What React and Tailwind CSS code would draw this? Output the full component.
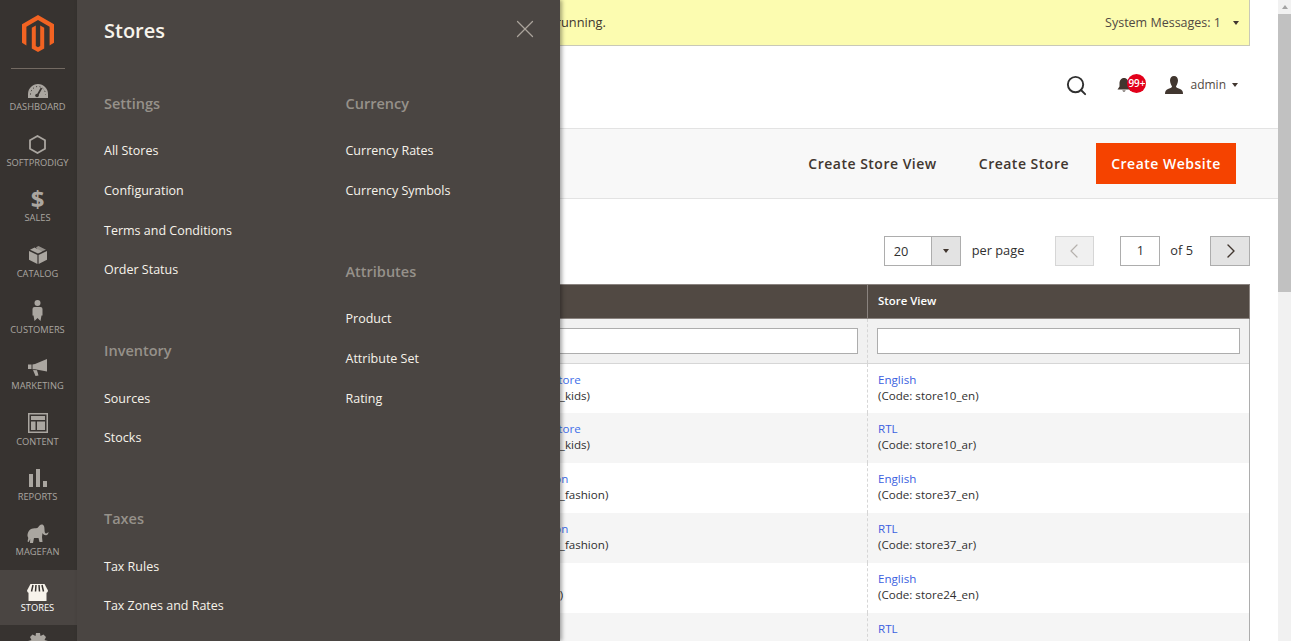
import React from 'react';
import { Search, X, ChevronLeft, ChevronRight } from 'lucide-react';

const LogoIcon = () => (
  <svg width="32" height="37" viewBox="0 0 32 37">
    <path fill="#f26322" d="M16 0 32 9.200V27.800L27.600 30.400V11.800L16 5.100 4.400 11.800 4.400 30.400 0 27.800V9.200Z" />
    <path fill="#f26322" d="M16 37 9.800 33.400V12.800L13.800 10.500V31L16 32.300 18.200 31V10.500L22.200 12.800V33.400Z" />
  </svg>
);

const icons = {
  dashboard: (
    <svg width="20" height="14" viewBox="0 0 20 14">
      <path fill="#aaa6a0" d="M10 0C4.500 0 0 4.500 0 10v4h20v-4C20 4.500 15.500 0 10 0Z" />
      <path stroke="#373330" strokeWidth="1" strokeDasharray="1 2.400" fill="none" d="M2.500 10.500C2.500 6 6 2.500 10 2.500S17.500 6 17.500 10.500" />
      <path stroke="#373330" strokeWidth="1.600" d="M9 12 13.500 4" />
      <circle cx="9" cy="11.500" r="1.800" fill="#373330" />
    </svg>
  ),
  hexagon: (
    <svg width="17" height="19" viewBox="0 0 17 19">
      <path fill="none" stroke="#aaa6a0" strokeWidth="1.800" d="M8.500 1 16 5.300V13.700L8.500 18 1 13.700V5.300Z" />
    </svg>
  ),
  catalog: (
    <svg width="18" height="18" viewBox="0 0 18 18">
      <path fill="#aaa6a0" d="M9 7.600 1 3.700 5.600 1.400 13 5.600Z" />
      <path fill="#aaa6a0" d="M10.500 6.800 15 4.500 17 3.700 9.500 0 7 1.200Z" opacity=".8" />
      <path fill="#aaa6a0" d="M0 5 8.400 9V18L0 13.800Z" />
      <path fill="#aaa6a0" d="M18 5 9.600 9V18L18 13.800Z" />
    </svg>
  ),
  customers: (
    <svg width="11" height="22" viewBox="0 0 11 22">
      <circle cx="5.500" cy="3" r="3" fill="#aaa6a0" />
      <path fill="#aaa6a0" d="M2.500 7H8.500Q10.500 7 10.500 9V15.500H9.500L8.500 21 5.500 18 2.500 21 1.500 15.500H.5V9Q.5 7 2.500 7Z" />
    </svg>
  ),
  marketing: (
    <svg width="20" height="17" viewBox="0 0 20 17">
      <path fill="#aaa6a0" d="M19 0V12.500L7 10.300 4.500 10.300V5.500L7 5Z" />
      <path fill="#aaa6a0" d="M0 5.500H3.500V10H0Z" />
      <path fill="#aaa6a0" d="M5 11 9 11.300 10.500 16.500 7.500 17Z" />
    </svg>
  ),
  content: (
    <svg width="20" height="20" viewBox="0 0 20 20">
      <path fill="none" stroke="#aaa6a0" strokeWidth="1.500" d="M.75.75h18.500v18.500H.75Z" />
      <path fill="#aaa6a0" d="M3 3H17V7H3ZM3 8.500H7.500V17H3ZM9 8.500H17V17H9Z" />
    </svg>
  ),
  reports: (
    <svg width="18" height="18" viewBox="0 0 18 18">
      <path fill="#aaa6a0" d="M0 5H4V18H0ZM7 0H11V18H7ZM14 12H18V18H14Z" />
    </svg>
  ),
  magefan: (
    <svg width="22" height="19" viewBox="0 0 22 19">
      <path fill="#aaa6a0" d="M.5 12C.5 8 2.500 5 6 4.500 8.500 4 10 4.500 11 3.500 12 1.500 13.500 0 15.500.5 17 1 17.500 3 17.500 5.500 17.500 8 18 9.500 19 9.500 20 9.500 20.500 8.500 21.500 8 21.500 10 20.500 11.200 19 11.200 17 11.200 16 10 15.500 9L15 13 15.500 18H12.500L11.500 14H7L6 19H3L3.200 15 1.800 18 .5 17.500 1.300 14Z" />
    </svg>
  ),
  stores: (
    <svg width="21" height="17" viewBox="0 0 21 17">
      <path fill="#f7f3eb" d="M1.500 8H19.500V17H1.500Z" />
      <path fill="#f7f3eb" d="M3.500 0H17.500L21 6.500Q21 9 17.500 9 3.500 9 3.500 9 0 9 0 6.500Z" />
      <path stroke="#373330" strokeWidth="1.500" d="M6 1 4.500 7.500M9 1 8.500 7.500M12 1 12.500 7.500M15 1 16.500 7.500" />
    </svg>
  ),
  gear: (
    <svg width="20" height="20" viewBox="0 0 20 20">
      <path fill="#aaa6a0" d="M8 0H12L12.500 3 15.500 1.500 18 4 16.500 7 20 8V12L16.500 13 18 16 15.500 18.500 12.500 17 12 20H8L7.500 17 4.500 18.500 2 16 3.500 13 0 12V8L3.500 7 2 4 4.500 1.500 7.500 3Z" />
    </svg>
  ),
};

const menu = [
  { label: 'DASHBOARD', icon: 'dashboard', h: 'h-[51px]', pb: 'pb-[6px]', iconBox: 'h-[18px]' },
  { label: 'SOFTPRODIGY', icon: 'hexagon', h: 'h-[56px]', pb: 'pb-[6px]', iconBox: 'h-[24px]' },
  { label: 'SALES', icon: 'sales', h: 'h-[55px]', pb: 'pb-[6px]', iconBox: 'h-[24px]' },
  { label: 'CATALOG', icon: 'catalog', h: 'h-[56px]', pb: 'pb-[6px]', iconBox: 'h-[24px]' },
  { label: 'CUSTOMERS', icon: 'customers', h: 'h-[56px]', pb: 'pb-[6px]', iconBox: 'h-[24px]' },
  { label: 'MARKETING', icon: 'marketing', h: 'h-[56px]', pb: 'pb-[6px]', iconBox: 'h-[24px]' },
  { label: 'CONTENT', icon: 'content', h: 'h-[56px]', pb: 'pb-[6px]', iconBox: 'h-[24px]' },
  { label: 'REPORTS', icon: 'reports', h: 'h-[55px]', pb: 'pb-[6px]', iconBox: 'h-[24px]' },
  { label: 'MAGEFAN', icon: 'magefan', h: 'h-[60px]', pb: 'pb-[11px]', iconBox: 'h-[24px]' },
];

const SideItem = ({ item, active }) => (
  <div className={`flex flex-col items-center justify-end pr-[2px] ${item.h} ${item.pb} ${active ? 'bg-[#4a4542] text-white' : 'text-[#aaa6a0]'}`}>
    <div className={`flex items-center justify-center ${item.iconBox}`}>
      {item.icon === 'sales' ? (
        <span className="text-[24px] leading-[20px] font-bold text-[#aaa6a0]">$</span>
      ) : (
        icons[item.icon]
      )}
    </div>
    <span className="text-[9.300px] leading-[14px]">{item.label}</span>
  </div>
);

const Sidebar = () => (
  <div className="w-[77px] h-[641px] shrink-0 bg-[#373330] overflow-hidden">
    <div className="flex justify-center pt-[15px] pr-[2px]">
      <LogoIcon />
    </div>
    <div className="ml-[11px] mr-[12px] mt-[16px] h-px bg-[#736a62]" />
    <div>
      {menu.map(item => <SideItem key={item.label} item={item} />)}
      <SideItem item={{ label: 'STORES', icon: 'stores', h: 'h-[55px]', pb: 'pb-[10px]', iconBox: 'h-[18px]' }} active />
      <div className="flex justify-center pt-[8px] pr-[2px]">{icons.gear}</div>
    </div>
  </div>
);

const MenuGroup = ({ title, items, className }) => (
  <div className={className}>
    <h3 className="text-[14.500px] leading-[20px] font-semibold text-[#96918a]">{title}</h3>
    <ul className="mt-[17.450px]">
      {items.map(i => (
        <li key={i} className="h-[39.600px] pt-[10px] text-[12.500px] leading-[20px] text-[#f7f3eb]">{i}</li>
      ))}
    </ul>
  </div>
);

const StoresPanel = () => (
  <div className="absolute left-[77px] top-0 w-[483px] h-[641px] bg-[#4a4542] shadow-[2px_0_4px_rgba(0,0,0,0.35)] overflow-hidden z-10">
    <div className="flex items-start justify-between pl-[27px] pr-[20px] pt-[17px]">
      <h2 className="text-[20px] leading-[27px] font-semibold text-[#f7f3eb]">Stores</h2>
      <X size={30} strokeWidth={1} className="text-[#aaa39b] -mt-[3px]" />
    </div>
    <div className="flex pl-[27px] pt-[50px]">
      <div className="w-[241.500px]">
        <MenuGroup title="Settings" items={['All Stores', 'Configuration', 'Terms and Conditions', 'Order Status']} />
        <MenuGroup className="mt-[51.350px]" title="Inventory" items={['Sources', 'Stocks']} />
        <MenuGroup className="mt-[51.350px]" title="Taxes" items={['Tax Rules', 'Tax Zones and Rates']} />
      </div>
      <div>
        <MenuGroup title="Currency" items={['Currency Rates', 'Currency Symbols']} />
        <MenuGroup className="mt-[51.350px]" title="Attributes" items={['Product', 'Attribute Set', 'Rating']} />
      </div>
    </div>
  </div>
);

const rows = [
  { store: 'Softprodigy Kids Store', code: '(Code: softprodigy_kids)', view: 'English', viewCode: '(Code: store10_en)', h: 'h-[49px]' },
  { store: 'Softprodigy Kids Store', code: '(Code: softprodigy_kids)', view: 'RTL', viewCode: '(Code: store10_ar)', h: 'h-[50px]', alt: true },
  { store: 'Softprodigy Fashion', code: '(Code: softprodigy_fashion)', view: 'English', viewCode: '(Code: store37_en)', h: 'h-[50px]' },
  { store: 'Softprodigy Fashion', code: '(Code: softprodigy_fashion)', view: 'RTL', viewCode: '(Code: store37_ar)', h: 'h-[50px]', alt: true },
  { store: 'Softprodigy', code: '(Code: softprodigy)', view: 'English', viewCode: '(Code: store24_en)', h: 'h-[50px]' },
  { store: 'Softprodigy', code: '(Code: softprodigy)', view: 'RTL', viewCode: '(Code: store24_ar)', h: 'h-[50px]', alt: true },
];

const StoreTable = () => (
  <div className="ml-[20px] mr-[28px] border-x border-[#adadad] text-[11.600px]">
    <div className="flex h-[35px] bg-[#514943] border border-[#8a837f] -mx-px text-white font-semibold items-center">
      <div className="w-[769px]" />
      <div className="h-full border-l border-[#8a837f] flex items-center pl-[10px] pb-[2px] text-[11.400px]">Store View</div>
    </div>
    <div className="flex h-[45px] bg-[#f1f1f1] border-b border-[#d6d6d6]">
      <div className="w-[769px] flex items-center pr-[9px] pl-[300px]">
        <div className="w-full h-[26px] bg-white border border-[#adadad]" />
      </div>
      <div className="flex-1 border-l border-dashed border-[#d6d6d6] flex items-center px-[9px]">
        <div className="w-full h-[26px] bg-white border border-[#adadad]" />
      </div>
    </div>
    {rows.map(r => (
      <div key={r.viewCode} className={`flex leading-[16px] ${r.h} ${r.alt ? 'bg-[#f5f5f5]' : 'bg-white'}`}>
        <div className="w-[769px] pl-[363px] pt-[8px] whitespace-nowrap">
          <div className="text-[#3d6ee8]">{r.store}</div>
          <div className="text-[#303030]">{r.code}</div>
        </div>
        <div className="flex-1 border-l border-dashed border-[#d6d6d6] pl-[10px] pt-[8px]">
          <div className="text-[#3d5fe0]">{r.view}</div>
          <div className="text-[#303030]">{r.viewCode}</div>
        </div>
      </div>
    ))}
  </div>
);

const Main = () => (
  <div className="w-[1201px] shrink-0 h-[641px] overflow-hidden bg-white text-[#41362f]">
    <div className="flex items-center justify-between h-[46px] ml-[20px] mr-[28px] bg-[#fcfcb0] border-b border-r border-[#c9c9b8] text-[12.800px]">
      <span className="ml-[278px]">One or more indexers are not running.</span>
      <span className="flex items-center mr-[10px] pt-[1px] text-[#514943] text-[12.500px]">
        System Messages: 1
        <span className="ml-[12px] w-0 h-0 border-x-[3.500px] border-x-transparent border-t-[4px] border-t-[#41362f]" />
      </span>
    </div>
    <div className="flex items-center justify-end h-[82px] pr-[40px] pb-[4px]">
      <Search size={23} strokeWidth={2} className="text-[#303030]" />
      <div className="relative ml-[29px] mr-[34px]">
        <svg width="14" height="15" viewBox="0 0 14 15">
          <path fill="#41362f" d="M7 0C4 0 2.500 2.500 2.500 5.500V8.500L.5 11.500H13.500L11.500 8.500V5.500C11.500 2.500 10 0 7 0ZM5.200 12.500a2 2 0 0 0 3.600 0Z" />
        </svg>
        <span className="absolute left-[10px] -top-[4px] w-[19px] h-[19px] rounded-full bg-[#e2001a] text-white text-[10px] font-semibold leading-[19px] text-center">99+</span>
      </div>
      <svg width="18" height="18" viewBox="0 0 18 18">
        <path fill="#41362f" d="M9 0C6.500 0 5 2 5 4.500 5 7 6.500 9.500 7 10.300 7 11.500 6 12 3 13 1 13.700 0 15 0 18H18C18 15 17 13.700 15 13 12 12 11 11.500 11 10.300 11.500 9.500 13 7 13 4.500 13 2 11.500 0 9 0Z" />
      </svg>
      <span className="ml-[7px] text-[12px] text-[#514943]">admin</span>
      <span className="ml-[6px] w-0 h-0 border-x-[3px] border-x-transparent border-t-[4px] border-t-[#41362f]" />
    </div>
    <div className="flex items-center justify-end h-[71px] bg-[#f8f8f8] border-y border-[#e3e3e3] pr-[42px] text-[14px] font-semibold tracking-[0.5px] text-[#41362f]">
      <span>Create Store View</span>
      <span className="ml-[42px]">Create Store</span>
      <span className="ml-[27px] h-[41px] w-[140px] flex items-center justify-center bg-[#f54300] text-white">Create Website</span>
    </div>
    <div className="flex items-center justify-end h-[85px] pt-[19px] pr-[28px] text-[12.800px] text-[#303030]">
      <div className="flex h-[30px] w-[77px] border border-[#adadad]">
        <span className="flex-1 pl-[9px] leading-[28px]">20</span>
        <span className="w-[29px] flex items-center justify-center bg-[#e3e3e3] border-l border-[#adadad]">
          <span className="w-0 h-0 border-x-[3.500px] border-x-transparent border-t-[4px] border-t-[#41362f]" />
        </span>
      </div>
      <span className="ml-[11px]">per page</span>
      <span className="ml-[31px] w-[39px] h-[30px] flex items-center justify-center bg-[#f0f0f0] border border-[#d6d6d6]">
        <ChevronLeft size={24} strokeWidth={1.200} className="text-[#b5b1ad] -mt-[1px] -ml-[2px]" />
      </span>
      <span className="ml-[26px] w-[40px] h-[30px] border border-[#adadad] flex items-center justify-center">1</span>
      <span className="ml-[10px]">of 5</span>
      <span className="ml-[17px] w-[40px] h-[30px] flex items-center justify-center bg-[#e3e3e3] border border-[#adadad]">
        <ChevronRight size={24} strokeWidth={1.400} className="text-[#41362f] -mt-[1px] ml-[2px]" />
      </span>
    </div>
    <StoreTable />
  </div>
);

const Scrollbar = () => (
  <div className="w-[13px] h-[641px] shrink-0 bg-[#f1f1f1] flex flex-col items-center">
    <div className="h-[14px] flex items-center">
      <span className="w-0 h-0 border-x-[3.500px] border-x-transparent border-b-[4px] border-b-[#a3a3a3]" />
    </div>
    <div className="w-full h-[278px] bg-[#c1c1c1]" />
  </div>
);

export default function App() {
  return (
    <div className="relative flex w-[1291px] h-[641px] overflow-hidden font-['Open_Sans',sans-serif]">
      <Sidebar />
      <StoresPanel />
      <Main />
      <Scrollbar />
    </div>
  );
}
